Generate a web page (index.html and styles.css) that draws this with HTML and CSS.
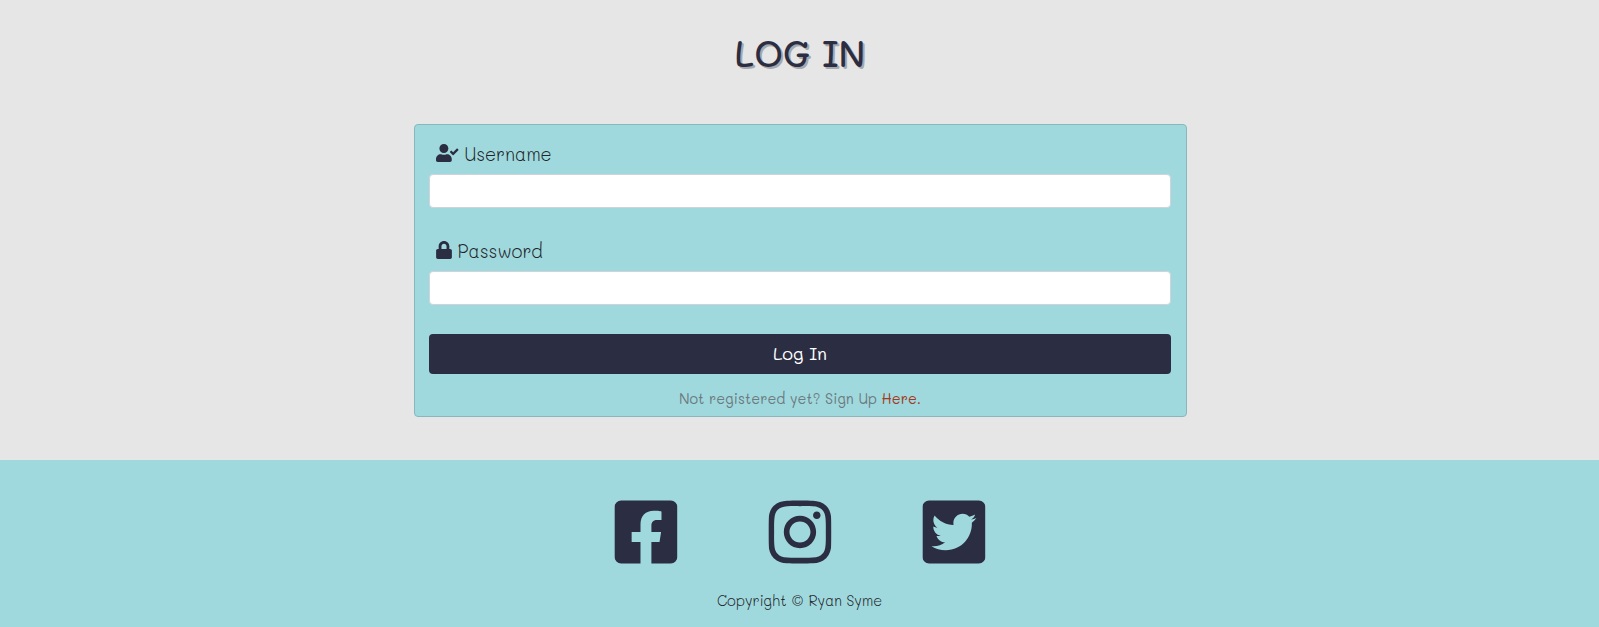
FILE: index.html
```html
<!DOCTYPE html>
<html lang="en">
<head>
<meta charset="utf-8">
<title>Log In</title>
<link rel="stylesheet" href="styles.css">
</head>
<body>
<main class="main">
  <h1 class="title">LOG IN</h1>
  <form class="card">
    <label class="label" for="username">
      <svg class="icon icon-user" viewBox="0 0 640 512"><path d="M224 256c70.7 0 128-57.3 128-128S294.700 0 224 0 96 57.300 96 128s57.300 128 128 128zm89.600 32h-16.700c-22.200 10.200-46.900 16-72.900 16s-50.600-5.800-72.900-16h-16.700C60.200 288 0 348.200 0 422.400V464c0 26.500 21.500 48 48 48h352c26.500 0 48-21.500 48-48v-41.600c0-74.200-60.200-134.400-134.400-134.400zm323-128.400l-27.800-28.100c-4.600-4.700-12.100-4.700-16.800-.1l-104.800 104-45.500-45.800c-4.600-4.700-12.100-4.700-16.800-.1l-28.100 27.900c-4.700 4.600-4.700 12.100-.1 16.800l81.700 82.300c4.600 4.700 12.100 4.700 16.800.1l141.300-140.200c4.600-4.700 4.700-12.200.1-16.800z"/></svg>
      <span class="label-text">Username</span>
    </label>
    <input class="input" id="username" type="text">
    <label class="label" for="password">
      <svg class="icon icon-lock" viewBox="0 0 448 512"><path d="M400 224h-24v-72C376 68.200 307.800 0 224 0S72 68.200 72 152v72H48c-26.500 0-48 21.500-48 48v192c0 26.500 21.500 48 48 48h352c26.500 0 48-21.500 48-48V272c0-26.500-21.500-48-48-48zm-104 0H152v-72c0-39.700 32.300-72 72-72s72 32.300 72 72v72z"/></svg>
      <span class="label-text">Password</span>
    </label>
    <input class="input" id="password" type="password">
    <button class="button" type="button">Log In</button>
    <p class="signup">Not registered yet? Sign Up <a class="link" href="#">Here.</a></p>
  </form>
</main>
<footer class="footer">
  <div class="social">
    <svg class="brand" viewBox="0 0 448 512"><path d="M400 32H48A48 48 0 0 0 0 80v352a48 48 0 0 0 48 48h137.250V327.690h-63V256h63v-54.640c0-62.150 37-96.480 93.670-96.480 27.140 0 55.520 4.840 55.520 4.840v61h-31.270c-30.810 0-40.420 19.120-40.420 38.730V256h68.780l-11 71.690h-57.780V480H400a48 48 0 0 0 48-48V80a48 48 0 0 0-48-48z"/></svg>
    <svg class="brand" viewBox="0 0 448 512"><path d="M224.100 141c-63.600 0-114.900 51.300-114.900 114.900s51.300 114.900 114.900 114.900S339 319.500 339 255.900 287.700 141 224.100 141zm0 189.600c-41.100 0-74.700-33.500-74.700-74.700s33.500-74.700 74.700-74.700 74.700 33.500 74.700 74.700-33.600 74.700-74.700 74.700zm146.400-194.300c0 14.900-12 26.800-26.800 26.800-14.900 0-26.800-12-26.800-26.800s12-26.800 26.800-26.800 26.800 12 26.800 26.800zm76.100 27.200c-1.700-35.900-9.900-67.700-36.200-93.900-26.200-26.200-58-34.400-93.900-36.200-37-2.100-147.900-2.100-184.900 0-35.800 1.700-67.600 9.900-93.900 36.100s-34.400 58-36.200 93.900c-2.100 37-2.100 147.900 0 184.900 1.700 35.900 9.900 67.700 36.200 93.900s58 34.400 93.900 36.200c37 2.100 147.900 2.100 184.900 0 35.900-1.700 67.700-9.900 93.900-36.200 26.200-26.200 34.400-58 36.200-93.900 2.100-37 2.100-147.800 0-184.800zM398.800 388c-7.800 19.600-22.900 34.700-42.600 42.600-29.500 11.700-99.500 9-132.100 9s-102.700 2.600-132.100-9c-19.600-7.800-34.700-22.900-42.600-42.600-11.700-29.500-9-99.500-9-132.100s-2.600-102.700 9-132.100c7.800-19.600 22.900-34.700 42.600-42.600 29.500-11.700 99.500-9 132.100-9s102.700-2.600 132.100 9c19.600 7.800 34.700 22.900 42.600 42.600 11.700 29.500 9 99.500 9 132.100s2.700 102.700-9 132.100z"/></svg>
    <svg class="brand" viewBox="0 0 448 512"><path d="M400 32H48C21.500 32 0 53.500 0 80v352c0 26.500 21.500 48 48 48h352c26.500 0 48-21.500 48-48V80c0-26.500-21.500-48-48-48zm-48.900 158.800c.2 2.800.2 5.700.2 8.500 0 86.700-66 186.600-186.600 186.600-37.200 0-71.700-10.800-100.700-29.400 5.300.6 10.400.8 15.800.8 30.700 0 58.900-10.400 81.400-28-28.800-.6-53-19.500-61.300-45.500 10.100 1.500 19.200 1.500 29.600-1.200-30-6.100-52.500-32.500-52.500-64.400v-.8c8.700 4.900 18.900 7.900 29.600 8.300a65.447 65.447 0 0 1-29.200-54.600c0-12.200 3.200-23.400 8.900-33.100 32.300 39.800 80.800 65.800 135.200 68.600-9.300-44.500 24-80.600 64-80.600 18.900 0 35.900 7.900 47.900 20.700 14.800-2.800 29-8.300 41.600-15.800-4.900 15.200-15.200 28-28.800 36.100 13.200-1.400 26-5.100 37.800-10.200-8.900 13.100-20.100 24.700-32.900 34z"/></svg>
  </div>
  <p class="copyright">Copyright © Ryan Syme</p>
</footer>
</body>
</html>
```
FILE: styles.css
```css
* { box-sizing: border-box; }
body {
  margin: 0;
  height: 627px;
  overflow: hidden;
  background: #e6e6e6;
  color: #2b2d42;
  font-family: Mali, Inter, "Open Sans", sans-serif;
  font-weight: 400;
}
.main { height: 460px; padding-top: 33px; }
.title {
  margin: 0 0 51px;
  height: 40px;
  line-height: 40px;
  text-align: center;
  font-size: 36px;
  font-weight: 500;
  text-indent: 1px;
  text-shadow: 2px 2px 0 #a5a9ae;
}
.card {
  display: flex;
  flex-direction: column;
  width: 773px;
  height: 293px;
  margin: 0 auto;
  position: relative;
  left: 1px;
  padding: 0 15px 0 14px;
  background: #a0d9dd;
  border: 1px solid #87b8bd;
  border-radius: 4px;
}
.label {
  display: flex;
  align-items: center;
  height: 20px;
  margin: 18px 0 11px 7px;
}
.input + .label { margin-top: 32px; }
.icon { height: 18px; fill: #2b2d42; }
.icon-user { width: 22.5px; margin-right: 6px; }
.icon-lock { width: 16px; margin-right: 5.500px; }
.label-text {
  padding-top: 1px;
  font-size: 18.300px;
  font-weight: 300;
  line-height: 20px;
  color: #212529;
}
.input {
  width: 100%;
  height: 34px;
  background: #fff;
  border: 1px solid #ced4da;
  border-radius: 4px;
  padding: 6px 12px;
}
.button {
  height: 40px;
  margin-top: 29px;
  padding: 0 0 2px;
  border: 0;
  border-radius: 4px;
  background: #2b2d42;
  color: #fff;
  font: inherit;
  font-size: 18px;
  line-height: 38px;
}
.signup {
  margin: 15px 0 0;
  text-align: center;
  font-size: 14.400px;
  line-height: 20px;
  color: #6c7b82;
}
.link { color: #a03a20; text-decoration: none; }
.footer { height: 167px; padding-top: 36px; background: #a0d9dd; }
.social {
  display: flex;
  justify-content: center;
  gap: 91px;
  transform: translateX(0.45px);
}
.brand { width: 63px; height: 72px; fill: #2b2d42; }
.copyright {
  margin: 23px 0 0;
  text-align: center;
  font-size: 14.600px;
  font-weight: 300;
  line-height: 20px;
  color: #212529;
}
```
